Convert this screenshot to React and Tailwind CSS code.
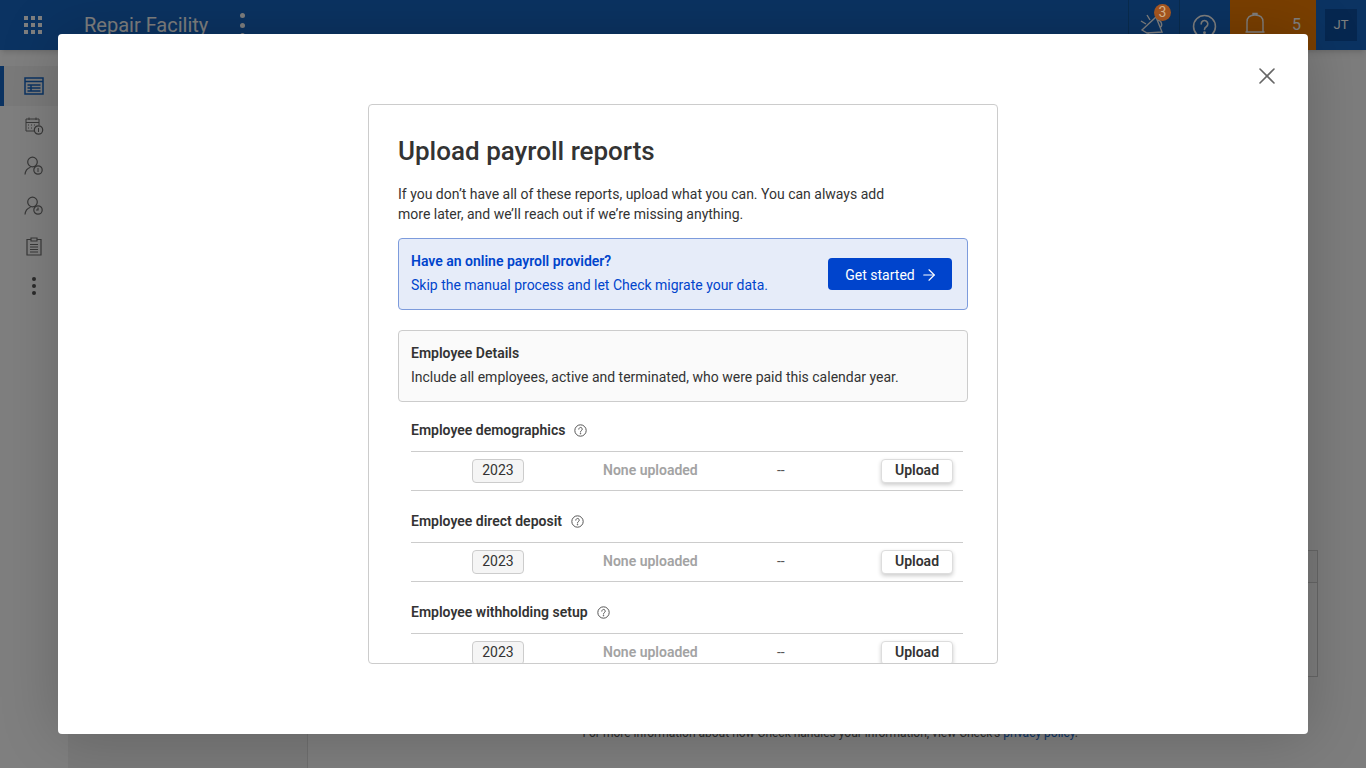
import { ArrowRight, X } from "lucide-react";

const font = { fontFamily: "Roboto, sans-serif" };

const reports = [
  { name: "Employee demographics", year: "2023" },
  { name: "Employee direct deposit", year: "2023" },
  { name: "Employee withholding setup", year: "2023" },
];

function HelpIcon({ size = 13, stroke = 1 }) {
  return (
    <svg width={size} height={size} viewBox="0 0 24 24" fill="none" stroke="currentColor" strokeWidth={stroke * 24 / size}>
      <circle cx="12" cy="12" r="10.5" />
      <path d="M8.8 9.5a3.2 3.2 0 1 1 4.9 2.7c-1.1.7-1.7 1.3-1.7 2.6" strokeLinecap="round" />
      <circle cx="12" cy="18" r="0.6" fill="currentColor" />
    </svg>
  );
}

function ListIcon() {
  return (
    <svg width="20" height="18" viewBox="0 0 20 18" fill="none" stroke="currentColor" strokeWidth="1.5">
      <rect x="1" y="1" width="18" height="16" />
      <path d="M1 4.500h18M3.500 8h13M3.500 11h13M3.500 14h13M7 8v6" />
    </svg>
  );
}

function CalendarIcon() {
  return (
    <svg width="20" height="20" viewBox="0 0 20 20" fill="none" stroke="currentColor" strokeWidth="1">
      <path d="M10 15H2V3h13v6M2 6.500h13M5 1.500v2.500M12 1.500v2.500M4 9h1M7 9h1M10 9h1M4 12h1M7 12h1" />
      <circle cx="14.500" cy="14" r="4.200" strokeWidth="1.200" />
      <path d="M14.500 12v4" />
    </svg>
  );
}

function PersonIcon({ clock }) {
  return (
    <svg width="20" height="20" viewBox="0 0 20 20" fill="none" stroke="currentColor" strokeWidth="1.200">
      <circle cx="8.500" cy="6" r="4.800" />
      <path d="M1 18.500c.3-3.800 2.400-6.300 5.500-7.300" />
      <circle cx="14" cy="14" r="4.200" />
      {clock ? <path d="M14 11.500V14h-2" /> : <path d="M14 12v4" strokeWidth="1" />}
    </svg>
  );
}

function ClipboardIcon() {
  return (
    <svg width="16" height="19" viewBox="0 0 16 19" fill="none" stroke="currentColor" strokeWidth="1.200">
      <path d="M5 2.500H1v15.500h14V2.500h-4" />
      <path d="M5 1h6v3H5zM4 7.500h8M4 10h8M4 12.500h8M4 15h8" />
    </svg>
  );
}

function MegaphoneIcon() {
  return (
    <svg width="28" height="26" viewBox="0 0 28 26" fill="none" stroke="currentColor" strokeWidth="1.400">
      <path d="M2 18 16 5l6 15-15 1zM17 8c2.500 0 4 1.500 4.500 3.500s-.5 3.500-1.500 4M8 21l2 4" />
      <path d="M1 9l5 3M7 3l3 5" />
    </svg>
  );
}

function BellIcon() {
  return (
    <svg width="24" height="30" viewBox="0 0 24 30" fill="none" stroke="currentColor" strokeWidth="1.400">
      <path d="M4 20.500V11C4 6.500 7 4 12 4s8 2.500 8 7v9.500M2.500 21h19M10 4V2.500h4V4M9.500 24c.5 1.500 1.500 2 2.500 2s2-.5 2.500-2" />
    </svg>
  );
}

function GridIcon() {
  return (
    <div className="grid grid-cols-[repeat(3,4px)] gap-[3px] w-fit">
      {Array.from({ length: 9 }).map((_, i) => (
        <span key={i} className="w-[4px] h-[4px] bg-white" />
      ))}
    </div>
  );
}

function VerticalDots({ className = "", dot = "w-[4px] h-[4px]" }) {
  return (
    <div className={`flex flex-col ${className}`}>
      <span className={`${dot} rounded-full bg-current`} />
      <span className={`${dot} rounded-full bg-current`} />
      <span className={`${dot} rounded-full bg-current`} />
    </div>
  );
}

function ReportSection({ report, first }) {
  return (
    <section className={`mx-[13px] shrink-0 w-[552px] ${first ? "-mt-[2px]" : ""}`}>
      <div className="h-[51px] pt-[9px] flex items-center gap-2 text-[14px] font-semibold text-[#333333]">
        {report.name}
        <span className="text-[#555555] ml-[1px]"><HelpIcon /></span>
      </div>
      <div className="h-[40px] pb-[1px] border-y border-[#cccccc] flex items-center text-[14px]">
        <span className="ml-[61px] w-[52px] h-[24px] flex items-center justify-center rounded border border-[#cccccc] bg-[#f5f5f5] text-[#333333]">
          {report.year}
        </span>
        <span className="ml-[79px] w-[174px] font-semibold text-[#a3a3a3]">None uploaded</span>
        <span className="text-[#555555]">--</span>
        <button className="ml-auto mr-[10px] w-[72px] h-[24px] rounded border border-[#dddddd] bg-white shadow-[0_2px_4px_rgba(0,0,0,0.2)] font-semibold text-[#333333]">
          Upload
        </button>
      </div>
    </section>
  );
}

export default function App() {
  return (
    <div className="relative w-[1366px] h-[768px] overflow-hidden bg-white flex flex-col" style={font}>
      {/* Page behind the dialog */}
      <header className="relative h-[50px] shrink-0 flex items-center bg-[#1666c4] shadow-md text-white">
        <div className="ml-[24px] w-[60px]"><GridIcon /></div>
        <span className="text-[20px]">Repair Facility</span>
        <VerticalDots className="ml-[32px] gap-[5px]" dot="w-[5px] h-[5px]" />
        <div className="ml-auto h-full flex items-center">
          <div className="w-[51px] h-full flex items-center justify-center border-l border-[#12599f]">
            <MegaphoneIcon />
            <span className="absolute z-[25] top-[4px] right-[195px] w-[17px] h-[17px] rounded-full bg-[#aa5820] text-[#dcb890] flex items-center justify-center text-[14px]">3</span>
          </div>
          <div className="w-[51px] h-full flex items-center justify-center border-l border-[#12599f] pt-[3px] pr-[1px]">
            <HelpIcon size={25} stroke={1.600} />
          </div>
          <div className="w-[86px] h-full flex items-center bg-[#f57f00] pl-[13px] gap-[25px]">
            <span className="mt-[1px]"><BellIcon /></span>
            <span className="text-[16px]">5</span>
          </div>
          <div className="w-[50px] h-full flex items-center justify-center">
            <span className="w-[32px] h-[32px] flex items-center justify-center bg-[#0d4fa0] text-[13px]">JT</span>
          </div>
        </div>
      </header>

      <div className="flex-1 flex min-h-0">
        <aside className="w-[68px] shrink-0 flex flex-col items-center text-[#707070] bg-white">
          <div className="mt-[16px] relative w-full h-[40px] flex items-center justify-center text-[#1666c4] bg-[#f4f4f4]">
            <span className="absolute left-0 top-0 w-[4px] h-full bg-[#1666c4]" />
            <ListIcon />
          </div>
          <div className="h-[40px] flex items-center justify-center"><CalendarIcon /></div>
          <div className="h-[40px] flex items-center justify-center"><PersonIcon /></div>
          <div className="h-[40px] flex items-center justify-center"><PersonIcon clock /></div>
          <div className="h-[40px] flex items-center justify-center"><ClipboardIcon /></div>
          <div className="h-[40px] flex items-center justify-center"><VerticalDots className="gap-[3px] text-[#555555]" /></div>
        </aside>
        <div className="w-[240px] shrink-0 bg-[#f2f2f2] border-r border-[#dddddd]" />
        <main className="flex-1 bg-[#fafafa] flex flex-col items-end pt-[500px] pr-[48px]">
          <div className="w-[300px] h-[127px] border border-[#cccccc]">
            <div className="h-[32px] border-b border-[#cccccc] bg-[#f2f2f2]" />
          </div>
          <p className="mt-[47px] mr-[240px] text-[12px] whitespace-nowrap text-[#555555]">
            For more information about how Check handles your information, view Check's <span className="text-[#1666c4]">privacy policy</span>.
          </p>
        </main>
      </div>

      {/* Dim layer and dialog */}
      <div className="absolute inset-0 z-20 bg-black/50" />
      <div className="absolute z-30 left-[58px] top-[34px] w-[1250px] h-[700px] bg-white rounded shadow-[0_0_60px_rgba(0,0,0,0.2)] flex justify-center pt-[70px]">
        <button className="absolute top-[28px] right-[27px] text-[#666666]">
          <X size={28} strokeWidth={1.400} />
        </button>
        <div className="w-[630px] h-[560px] rounded border border-[#cccccc] overflow-hidden flex flex-col">
          <div className="px-[29px]">
            <h1 className="mt-[28px] text-[26px] leading-[36px] font-medium text-[#333333]">Upload payroll reports</h1>
            <p className="mt-[15px] w-[500px] text-[14px] leading-[20px] text-[#333333]">
              If you don’t have all of these reports, upload what you can. You can always add more later, and we’ll reach out if we’re missing anything.
            </p>
            <div className="mt-[14px] h-[72px] rounded border border-[#7d9bdc] bg-[#e6ecf9] flex items-center justify-between pl-[12px] pr-[15px]">
              <div className="pb-[2px] text-[14px] leading-[24px] text-[#0044cc]">
                <div className="font-semibold">Have an online payroll provider?</div>
                <div>Skip the manual process and let Check migrate your data.</div>
              </div>
              <button className="w-[124px] h-[32px] pt-[2px] pl-[3px] rounded bg-[#0044cc] text-white text-[14px] flex items-center justify-center gap-[5px]">
                Get started <ArrowRight size={18} strokeWidth={1.500} />
              </button>
            </div>
            <div className="mt-[20px] h-[72px] pb-[2px] rounded border border-[#cccccc] bg-[#fafafa] flex flex-col justify-center pl-[12px] text-[14px] leading-[24px] text-[#333333]">
              <div className="font-semibold">Employee Details</div>
              <div>Include all employees, active and terminated, who were paid this calendar year.</div>
            </div>
          </div>
          <div className="px-[29px] flex flex-col">
            {reports.map((r, i) => (
              <ReportSection key={r.name} report={r} first={i === 0} />
            ))}
          </div>
        </div>
      </div>
    </div>
  );
}
